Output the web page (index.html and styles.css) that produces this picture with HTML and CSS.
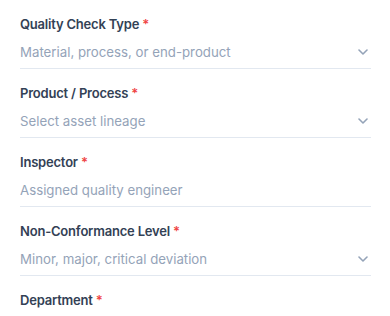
FILE: index.html
```html
<!DOCTYPE html>
<html lang="en">
<head>
    <meta charset="UTF-8">
    <meta name="viewport" content="width=device-width, initial-scale=1.0">
    <title>Quality Check</title>
    <link rel="stylesheet" href="styles.css">
</head>
<body>
    <form class="form">
        <div class="field">
            <label class="label" for="check-type">Quality Check Type <span class="req">*</span></label>
            <div class="select">
                <select id="check-type" class="control">
                    <option value="" selected disabled>Material, process, or end-product</option>
                </select>
                <svg class="chevron" width="10" height="6" viewBox="0 0 10 6"><path d="M1 1l4 4 4-4" fill="none" stroke="currentColor" stroke-width="1.6" stroke-linecap="round" stroke-linejoin="round"/></svg>
            </div>
        </div>
        <div class="field">
            <label class="label" for="product">Product / Process <span class="req">*</span></label>
            <div class="select">
                <select id="product" class="control">
                    <option value="" selected disabled>Select asset lineage</option>
                </select>
                <svg class="chevron" width="10" height="6" viewBox="0 0 10 6"><path d="M1 1l4 4 4-4" fill="none" stroke="currentColor" stroke-width="1.6" stroke-linecap="round" stroke-linejoin="round"/></svg>
            </div>
        </div>
        <div class="field">
            <label class="label" for="inspector">Inspector <span class="req">*</span></label>
            <input id="inspector" class="control" type="text" placeholder="Assigned quality engineer">
        </div>
        <div class="field">
            <label class="label" for="level">Non-Conformance Level <span class="req">*</span></label>
            <div class="select">
                <select id="level" class="control">
                    <option value="" selected disabled>Minor, major, critical deviation</option>
                </select>
                <svg class="chevron" width="10" height="6" viewBox="0 0 10 6"><path d="M1 1l4 4 4-4" fill="none" stroke="currentColor" stroke-width="1.6" stroke-linecap="round" stroke-linejoin="round"/></svg>
            </div>
        </div>
        <div class="field">
            <label class="label" for="department">Department <span class="req">*</span></label>
            <div class="select">
                <select id="department" class="control">
                    <option value="" selected disabled>Responsible unit</option>
                </select>
                <svg class="chevron" width="10" height="6" viewBox="0 0 10 6"><path d="M1 1l4 4 4-4" fill="none" stroke="currentColor" stroke-width="1.6" stroke-linecap="round" stroke-linejoin="round"/></svg>
            </div>
        </div>
    </form>
</body>
</html>
```

FILE: styles.css
```css
body {
    margin: 0;
    padding: 15px 19px 0 20px;
    background: #fff;
    font-family: Inter, "Noto Sans", sans-serif;
    color: #334155;
}
.form {
    display: flex;
    flex-direction: column;
    gap: 15px;
}
.field {
    display: flex;
    flex-direction: column;
}
.label {
    font-size: 13px;
    line-height: 18px;
    font-weight: 600;
    letter-spacing: -0.2px;
    color: #334155;
}
.req {
    color: #ef4444;
}
.select {
    position: relative;
}
.control {
    display: block;
    width: 100%;
    box-sizing: border-box;
    height: 36px;
    margin: 0;
    padding: 9px 24px 6px 0;
    border: none;
    border-bottom: 1px solid #e2e8f0;
    border-radius: 0;
    background: transparent;
    font-family: inherit;
    font-size: 13.25px;
    line-height: 20px;
    color: #94a3b8;
    outline: none;
    appearance: none;
    -webkit-appearance: none;
}
.control::placeholder {
    color: #94a3b8;
}
.chevron {
    position: absolute;
    right: 3px;
    top: 16px;
    color: #94a3b8;
    pointer-events: none;
}
```
